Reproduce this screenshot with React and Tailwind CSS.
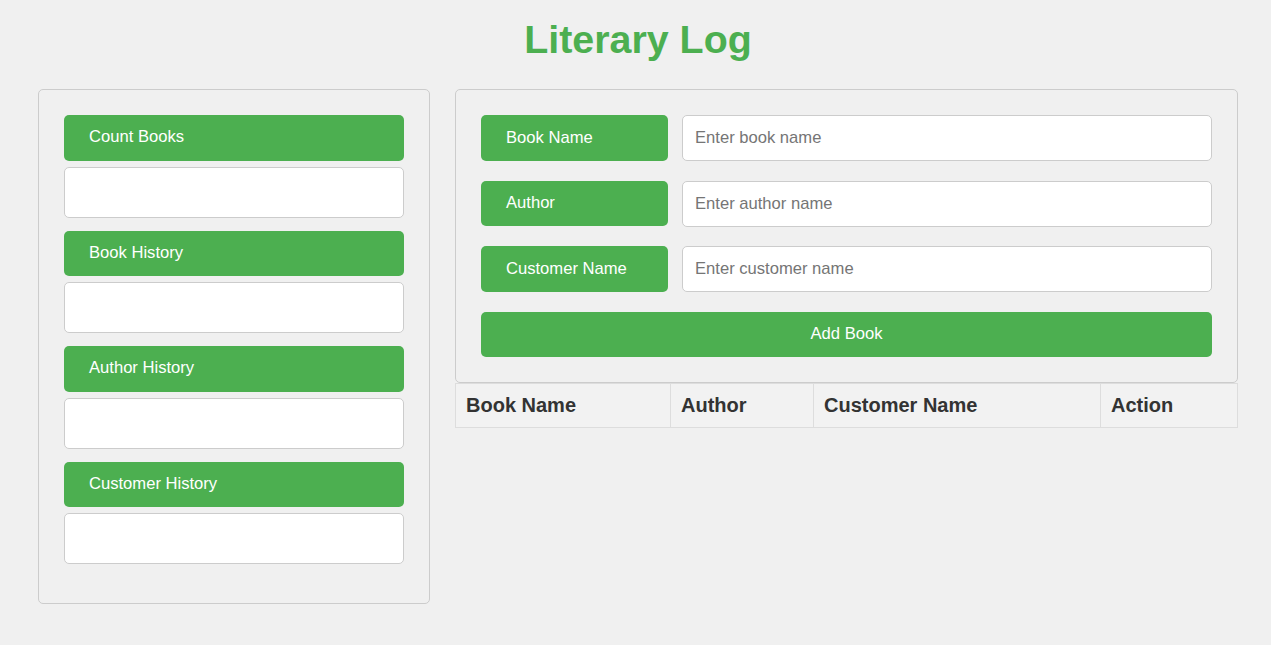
import React from "react";

function SideItem({ label }) {
  return (
    <div className="mb-[13px]">
      <div className="h-[45.5px] flex items-center px-[25px] bg-[#4caf50] rounded-[5px] text-white text-[16.6px]">
        {label}
      </div>
      <div className="mt-[6px] h-[51px] bg-white border border-[#cccccc] rounded-[5px]"></div>
    </div>
  );
}

function FormRow({ label, placeholder }) {
  return (
    <div className="flex items-center h-[46px]">
      <div className="w-[187px] h-[45.5px] flex items-center px-[25px] bg-[#4caf50] rounded-[5px] text-white text-[16.6px] shrink-0">
        {label}
      </div>
      <input
        type="text"
        placeholder={placeholder}
        className="ml-[14px] flex-1 h-[46px] bg-white border border-[#cccccc] rounded-[5px] px-[12px] text-[16.6px] text-[#333] placeholder:text-[#757575] outline-none"
      />
    </div>
  );
}

export default function App() {
  return (
    <div className="min-h-screen bg-[#f0f0f0] font-['Liberation_Sans',Arial,sans-serif]">
      <div className="w-[1200px] ml-[38px] pt-[10px]">
        <h1 className="h-[46px] text-center text-[39.4px] font-bold text-[#4caf50] leading-normal">
          Literary Log
        </h1>
        <div className="flex items-start gap-[25px] mt-[33px]">
          <div className="w-[392px] border border-[#cccccc] rounded-[5px] px-[25px] pt-[25px] pb-[26px]">
            <SideItem label="Count Books" />
            <SideItem label="Book History" />
            <SideItem label="Author History" />
            <SideItem label="Customer History" />
          </div>
          <div className="w-[783px]">
            <div className="border border-[#cccccc] rounded-[5px] p-[25px] flex flex-col gap-[19.5px]">
              <FormRow label="Book Name" placeholder="Enter book name" />
              <FormRow label="Author" placeholder="Enter author name" />
              <FormRow label="Customer Name" placeholder="Enter customer name" />
              <button className="h-[45px] w-full bg-[#4caf50] rounded-[5px] text-white text-[16.6px]">
                Add Book
              </button>
            </div>
            <table className="w-[783px] border-collapse bg-[#f2f2f2] text-[#333] table-fixed">
              <thead>
                <tr className="h-[44px]">
                  <th className="w-[215px] border border-[#dddddd] px-[10px] text-left text-[20px] font-bold">Book Name</th>
                  <th className="w-[143px] border border-[#dddddd] px-[10px] text-left text-[20px] font-bold">Author</th>
                  <th className="w-[287px] border border-[#dddddd] px-[10px] text-left text-[20px] font-bold">Customer Name</th>
                  <th className="border border-[#dddddd] px-[10px] text-left text-[20px] font-bold">Action</th>
                </tr>
              </thead>
            </table>
          </div>
        </div>
      </div>
    </div>
  );
}
